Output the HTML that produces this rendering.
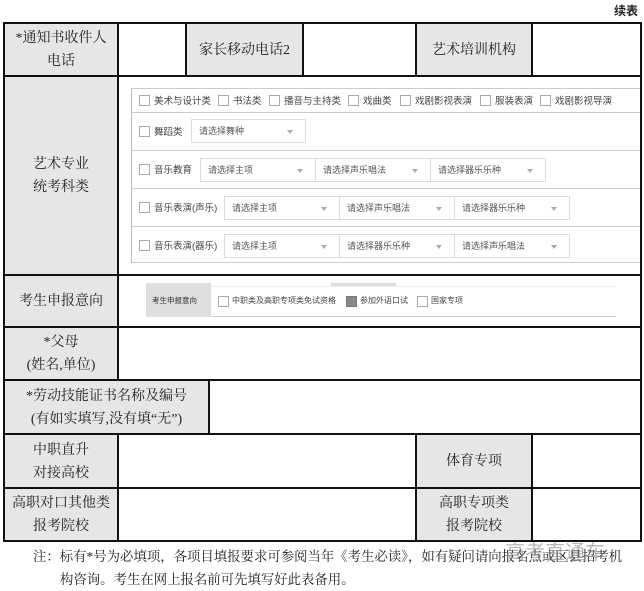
<!DOCTYPE html><html><head><meta charset="utf-8"><style>
body{margin:0;width:644px;height:591px;background:#fff;position:relative;overflow:hidden;font-family:"Liberation Serif","Noto Serif CJK SC",serif;color:#222}
.c{position:absolute;box-sizing:border-box;display:flex;align-items:center;justify-content:center;text-align:center;font-size:14px;line-height:23px}
.g{background:#e6e6e6}
.h{position:absolute;background:#111;height:2px}
.v{position:absolute;background:#111;width:2px}
.s{position:absolute;font-family:"Liberation Sans","Noto Sans CJK SC",sans-serif;font-size:9.5px;color:#444;white-space:nowrap}
.cb{position:absolute;width:9px;height:9px;border:1px solid #aaa;background:#fff}
.sel{position:absolute;height:24px;border:1px solid #ddd;box-sizing:border-box;background:#fff;font-family:"Liberation Sans","Noto Sans CJK SC",sans-serif;font-size:9px;color:#555;line-height:22px;padding-left:7px}
.sel:after{content:"";position:absolute;right:12px;top:10px;border-left:3px solid transparent;border-right:3px solid transparent;border-top:4px solid #aaa}
.hl{position:absolute;height:1px;background:#ccc;left:132px;width:508px}
</style></head><body>
<div style="position:absolute;right:6px;top:2px;font-size:12px;font-weight:bold;font-family:'Noto Sans CJK SC',sans-serif">续表</div>
<div class="c g" style="left:4px;top:24px;width:114px;height:52px">*通知书收件人<br>电话</div>
<div class="c g" style="left:186px;top:24px;width:117px;height:52px">家长移动电话2</div>
<div class="c g" style="left:416px;top:24px;width:116px;height:52px">艺术培训机构</div>
<div class="c g" style="left:4px;top:77px;width:114px;height:198px">艺术专业<br>统考科类</div>
<div class="c g" style="left:4px;top:276px;width:114px;height:51px">考生申报意向</div>
<div class="c g" style="left:4px;top:328px;width:114px;height:52px">*父母<br>(姓名,单位)</div>
<div class="c g" style="left:4px;top:381px;width:205px;height:53px">*劳动技能证书名称及编号<br>(有如实填写,没有填“无”)</div>
<div class="c g" style="left:4px;top:435px;width:114px;height:53px">中职直升<br>对接高校</div>
<div class="c g" style="left:416px;top:435px;width:116px;height:53px">体育专项</div>
<div class="c g" style="left:4px;top:489px;width:114px;height:52px">高职对口其他类<br>报考院校</div>
<div class="c g" style="left:416px;top:489px;width:116px;height:52px">高职专项类<br>报考院校</div>
<div class="h" style="left:3px;width:639px;top:22px"></div>
<div class="h" style="left:3px;width:639px;top:75px"></div>
<div class="h" style="left:3px;width:639px;top:274px"></div>
<div class="h" style="left:3px;width:639px;top:326px"></div>
<div class="h" style="left:3px;width:639px;top:379px"></div>
<div class="h" style="left:3px;width:639px;top:433px"></div>
<div class="h" style="left:3px;width:639px;top:487px"></div>
<div class="h" style="left:3px;width:639px;top:540px"></div>
<div class="v" style="left:3px;top:22px;height:520px"></div>
<div class="v" style="left:640px;top:22px;height:520px"></div>
<div class="v" style="left:117px;top:22px;height:358px"></div>
<div class="v" style="left:117px;top:433px;height:108px"></div>
<div class="v" style="left:185px;top:22px;height:54px"></div>
<div class="v" style="left:302px;top:22px;height:54px"></div>
<div class="v" style="left:415px;top:22px;height:54px"></div>
<div class="v" style="left:531px;top:22px;height:54px"></div>
<div class="v" style="left:208px;top:379px;height:55px"></div>
<div class="v" style="left:415px;top:433px;height:108px"></div>
<div class="v" style="left:531px;top:433px;height:108px"></div>
<div style="position:absolute;left:131px;top:88px;width:1px;height:175px;background:#bbb"></div>
<div class="hl" style="top:88px"></div><div class="hl" style="top:112px"></div><div class="hl" style="top:150px"></div><div class="hl" style="top:188px"></div><div class="hl" style="top:226px"></div><div class="hl" style="top:262px"></div>
<div class="cb" style="left:139px;top:95px"></div><div class="s" style="left:154px;top:93px">美术与设计类</div>
<div class="cb" style="left:218px;top:95px"></div><div class="s" style="left:233px;top:93px">书法类</div>
<div class="cb" style="left:269px;top:95px"></div><div class="s" style="left:284px;top:93px">播音与主持类</div>
<div class="cb" style="left:348px;top:95px"></div><div class="s" style="left:363px;top:93px">戏曲类</div>
<div class="cb" style="left:400px;top:95px"></div><div class="s" style="left:415px;top:93px">戏剧影视表演</div>
<div class="cb" style="left:480px;top:95px"></div><div class="s" style="left:495px;top:93px">服装表演</div>
<div class="cb" style="left:540px;top:95px"></div><div class="s" style="left:555px;top:93px">戏剧影视导演</div>
<div class="cb" style="left:139px;top:126px"></div><div class="s" style="left:154px;top:124px">舞蹈类</div>
<div class="sel" style="left:191px;top:119px;width:115px">请选择舞种</div>
<div class="cb" style="left:139px;top:164px"></div><div class="s" style="left:154px;top:162px">音乐教育</div>
<div class="sel" style="left:200px;top:158px;width:116px">请选择主项</div>
<div class="sel" style="left:315px;top:158px;width:116px">请选择声乐唱法</div>
<div class="sel" style="left:430px;top:158px;width:116px">请选择器乐乐种</div>
<div class="cb" style="left:139px;top:202px"></div><div class="s" style="left:154px;top:200px">音乐表演(声乐)</div>
<div class="sel" style="left:224px;top:196px;width:116px">请选择主项</div>
<div class="sel" style="left:339px;top:196px;width:116px">请选择声乐唱法</div>
<div class="sel" style="left:454px;top:196px;width:116px">请选择器乐乐种</div>
<div class="cb" style="left:139px;top:240px"></div><div class="s" style="left:154px;top:238px">音乐表演(器乐)</div>
<div class="sel" style="left:224px;top:234px;width:116px">请选择主项</div>
<div class="sel" style="left:339px;top:234px;width:116px">请选择器乐乐种</div>
<div class="sel" style="left:454px;top:234px;width:116px">请选择声乐唱法</div>
<div style="position:absolute;left:331px;top:283px;width:65px;height:3px;background:#ddd"></div>
<div style="position:absolute;left:146px;top:286px;width:470px;height:31px;border-bottom:1px solid #ccc;border-top:1px solid #eee;box-sizing:border-box"></div>
<div style="position:absolute;left:146px;top:283px;width:65px;height:34px;background:#ddd"></div>
<div class="s" style="left:152px;top:295px;font-size:7.5px;color:#333">考生申报意向</div>
<div class="cb" style="left:218px;top:296px"></div><div class="s" style="left:232px;top:295px;font-size:8px">中职类及高职专项类免试资格</div>
<div class="cb" style="left:346px;top:296px;background:#888;border-color:#777"></div><div class="s" style="left:360px;top:295px;font-size:8px">参加外语口试</div>
<div class="cb" style="left:417px;top:296px"></div><div class="s" style="left:431px;top:295px;font-size:8px">国家专项</div>
<div style="position:absolute;left:33px;top:545px;font-size:13.4px;line-height:23px;white-space:nowrap">注：标有*号为必填项，各项目填报要求可参阅当年《考生必读》，如有疑问请向报名点或区县招考机<br><span style="padding-left:27px">构咨询。考生在网上报名前可先填写好此表备用。</span></div>
<div style="position:absolute;left:505px;top:536px;font-size:20px;color:rgba(120,120,120,.55);font-family:'Noto Sans CJK SC',sans-serif">高考直通车</div>
</body></html>
